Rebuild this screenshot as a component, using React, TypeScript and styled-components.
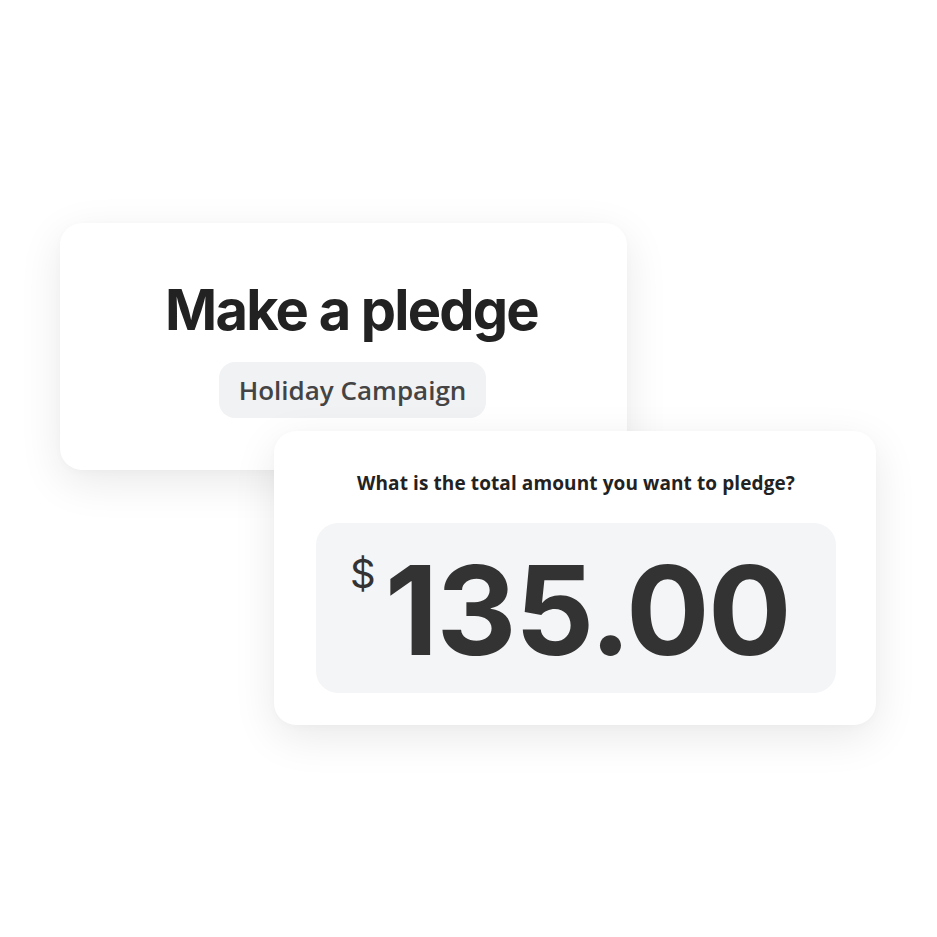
import React from "react";
import styled, { createGlobalStyle } from "styled-components";

const Global = createGlobalStyle`
  html, body { margin: 0; padding: 0; background: #ffffff; }
  body { font-family: "Open Sans", Lato, sans-serif; }
`;

const Canvas = styled.div`
  width: 937px;
  height: 937px;
  display: flex;
  flex-direction: column;
  align-items: flex-start;
  padding-top: 223px;
  box-sizing: border-box;
`;

const Card = styled.section<{ $w: number; $h: number; $left: number; $overlap?: number }>`
  position: relative;
  width: ${(p) => p.$w}px;
  height: ${(p) => p.$h}px;
  margin-left: ${(p) => p.$left}px;
  margin-top: ${(p) => -(p.$overlap ?? 0)}px;
  background: #ffffff;
  border-radius: 22px;
  box-shadow: 0 12px 44px rgba(0, 0, 0, 0.09), 0 2px 8px rgba(0, 0, 0, 0.02);
  box-sizing: border-box;
  display: flex;
  flex-direction: column;
  align-items: center;
`;

const Title = styled.h1`
  margin: 54px 0 0 16px;
  font-family: Inter, sans-serif;
  font-weight: 700;
  font-size: 56px;
  line-height: 66px;
  letter-spacing: -1.8px;
  color: #222222;
`;

const Pill = styled.div`
  margin: 19px 0 0 18px;
  height: 56px;
  padding: 0 20px;
  border-radius: 16px;
  background: #f1f2f4;
  display: flex;
  align-items: center;
  font-family: "Open Sans", sans-serif;
  font-size: 26px;
  font-weight: 600;
  color: #444444;
`;

const Question = styled.p`
  margin: 38px 0 0 2px;
  font-family: "Open Sans", sans-serif;
  font-weight: 700;
  font-size: 19px;
  line-height: 28px;
  letter-spacing: 0.1px;
  color: #222222;
`;

const AmountBox = styled.div`
  margin: 26px 0 0 2px;
  width: 520px;
  height: 170px;
  padding-right: 12px;
  box-sizing: border-box;
  border-radius: 22px;
  background: #f4f5f7;
  display: flex;
  justify-content: center;
  align-items: center;
  color: #333333;
`;

const Amount = styled.div`
  display: flex;
  align-items: flex-start;
  font-family: Inter, sans-serif;
`;

const Currency = styled.span`
  font-size: 40px;
  font-weight: 400;
  line-height: 40px;
  margin-top: 10px;
  margin-right: 9px;
`;

const Value = styled.span`
  font-size: 124px;
  font-weight: 700;
  line-height: 124px;
  letter-spacing: -1.6px;
  margin-top: 4px;
`;

export default function App() {
  return (
    <>
      <Global />
      <Canvas>
        <Card $w={567} $h={247} $left={60}>
          <Title>Make a pledge</Title>
          <Pill>Holiday Campaign</Pill>
        </Card>
        <Card $w={602} $h={294} $left={274} $overlap={39}>
          <Question>What is the total amount you want to pledge?</Question>
          <AmountBox>
            <Amount>
              <Currency>$</Currency>
              <Value>135.00</Value>
            </Amount>
          </AmountBox>
        </Card>
      </Canvas>
    </>
  );
}
